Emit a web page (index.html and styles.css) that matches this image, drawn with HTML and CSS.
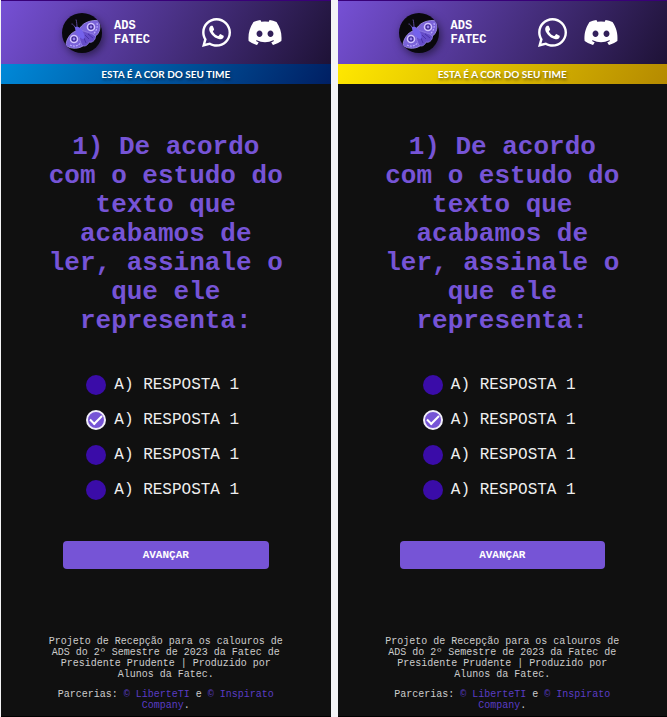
FILE: index.html
```html
<!DOCTYPE html>
<html lang="pt-BR">
<head>
<meta charset="utf-8">
<meta name="viewport" content="width=device-width, initial-scale=1">
<title>ADS FATEC</title>
<link rel="stylesheet" href="styles.css">
</head>
<body>
<svg class="sprite" aria-hidden="true">
  <symbol id="moth" viewBox="0 0 40 40">
    <path d="M14.500 16.500C12 13 11 10.500 9.500 11M15.500 16C14.500 12 15 9 14 6.500" fill="none" stroke="#6c58b8" stroke-width=".8"/>
    <path d="M18 15C22 9 29 7 37 7.500C39 14 38 20 33 23.500C27 25 21 21 18 15Z" fill="#7a63d8" stroke="#a896f2" stroke-width=".8"/>
    <path d="M14 18C8 20 4 27 4 32.500C9 36.500 18 36 22 32C21 25 18 21 14 18Z" fill="#7a63d8" stroke="#a896f2" stroke-width=".8"/>
    <path d="M18 17C24 19 30 20 33.500 23C33.500 28 29.500 30 27 29C26 32 23 34 20 32.500C18 28 16 23 18 17Z" fill="#654cc9" stroke="#9583e8" stroke-width=".8"/>
    <path d="M35 10C36 14 34 19 31 21M8 32C12 34 16 33 18.500 30" fill="none" stroke="#b9a8fa" stroke-width="1.200" stroke-dasharray="2 1"/>
    <path d="M23 22L27 26M22 25L24 30M26 21L31 25" fill="none" stroke="#4530a5" stroke-width=".9"/>
    <path d="M13 14C17 13 20 16 21.500 20C23 23 23 26 21 26C17 25 13 20 13 14Z" fill="#7462ec"/>
    <circle cx="29" cy="14" r="3.500" fill="#3a2593" stroke="#d3c4ff" stroke-width="1.600"/>
    <circle cx="29" cy="14" r="1.400" fill="#9d86f0"/>
    <circle cx="12" cy="26" r="3.500" fill="#3a2593" stroke="#d3c4ff" stroke-width="1.600"/>
    <circle cx="12" cy="26" r="1.400" fill="#9d86f0"/>
  </symbol>
  <symbol id="whatsapp" viewBox="0 0 448 448">
    <path fill="#fff" d="M380.900 65.100C339 23.100 283.200 0 223.900 0 101.500 0 1.900 99.600 1.900 222c0 39.100 10.200 77.300 29.600 111L0 448l117.700-30.900c32.400 17.700 68.900 27 106.100 27h.1c122.300 0 224.100-99.600 224.100-222 0-59.300-25.200-115-67.100-157zm-157 341.600c-33.200 0-65.700-8.900-94-25.700l-6.700-4-69.800 18.300L72 327.200l-4.400-7c-18.500-29.400-28.200-63.300-28.200-98.200 0-101.700 82.800-184.500 184.600-184.500 49.300 0 95.600 19.200 130.400 54.100 34.800 34.900 56.200 81.200 56.100 130.500 0 101.800-84.900 184.600-186.600 184.600zm101.200-138.200c-5.500-2.800-32.800-16.200-37.900-18-5.100-1.900-8.800-2.800-12.500 2.800-3.700 5.600-14.300 18-17.600 21.800-3.200 3.700-6.500 4.200-12 1.400-32.600-16.300-54-29.100-75.500-66-5.700-9.800 5.700-9.100 16.300-30.300 1.800-3.700.9-6.900-.5-9.700-1.400-2.800-12.500-30.100-17.100-41.200-4.500-10.800-9.100-9.300-12.500-9.500-3.200-.2-6.900-.2-10.600-.2-3.700 0-9.700 1.400-14.800 6.900-5.100 5.600-19.400 19-19.400 46.300 0 27.300 19.900 53.700 22.600 57.400 2.800 3.700 39.100 59.700 94.800 83.800 35.200 15.200 49 16.500 66.600 13.900 10.700-1.600 32.800-13.400 37.400-26.400 4.600-13 4.600-24.100 3.200-26.400-1.300-2.500-5-3.900-10.500-6.600z"/>
  </symbol>
  <symbol id="discord" viewBox="0 0 640 512">
    <path fill="#fff" d="M524.531 69.836a1.500 1.500 0 0 0-.764-.7A485.065 485.065 0 0 0 404.081 32.030a1.816 1.816 0 0 0-1.923.91 337.461 337.461 0 0 0-14.900 30.600 447.848 447.848 0 0 0-134.426 0 309.541 309.541 0 0 0-15.135-30.600 1.890 1.890 0 0 0-1.924-.91A483.689 483.689 0 0 0 116.085 69.137a1.712 1.712 0 0 0-.788.676C39.068 183.651 18.186 294.690 28.430 404.354a2.016 2.016 0 0 0 .765 1.375A487.666 487.666 0 0 0 176.020 479.918a1.900 1.900 0 0 0 2.063-.676A348.200 348.200 0 0 0 208.120 430.400a1.860 1.860 0 0 0-1.019-2.588 321.173 321.173 0 0 1-45.868-21.853 1.885 1.885 0 0 1-.185-3.126c3.082-2.309 6.166-4.711 9.109-7.137a1.819 1.819 0 0 1 1.900-.256c96.229 43.917 200.410 43.917 295.500 0a1.812 1.812 0 0 1 1.924.233c2.944 2.426 6.027 4.851 9.132 7.160a1.884 1.884 0 0 1-.162 3.126 301.407 301.407 0 0 1-45.890 21.830 1.875 1.875 0 0 0-1 2.611 391.055 391.055 0 0 0 30.014 48.815 1.864 1.864 0 0 0 2.063.7A486.048 486.048 0 0 0 610.700 405.729a1.882 1.882 0 0 0 .765-1.352C623.729 277.594 590.933 167.465 524.531 69.836ZM222.491 337.580c-28.972 0-52.844-26.587-52.844-59.239S193.056 219.100 222.491 219.100c29.665 0 53.306 26.820 52.843 59.239C275.334 310.993 251.924 337.580 222.491 337.580Zm195.380 0c-28.971 0-52.843-26.587-52.843-59.239S388.437 219.100 417.871 219.100c29.667 0 53.307 26.820 52.844 59.239C470.715 310.993 447.538 337.580 417.871 337.580Z"/>
  </symbol>
</svg>
<div class="screens">
  <section class="screen">
    <header class="header">
      <div class="brand">
        <svg class="logo" aria-hidden="true"><use href="#moth"/></svg>
        <span>ADS<br>FATEC</span>
      </div>
      <nav class="social">
        <a href="#" aria-label="WhatsApp"><svg class="icon-whatsapp"><use href="#whatsapp"/></svg></a>
        <a href="#" aria-label="Discord"><svg class="icon-discord"><use href="#discord"/></svg></a>
      </nav>
    </header>
    <p class="team team-blue">ESTA É A COR DO SEU TIME</p>
    <main class="quiz">
      <h1 id="question-blue">1) De acordo com o estudo do texto que acabamos de ler, assinale o que ele representa:</h1>
      <form class="form" aria-labelledby="question-blue">
        <div class="answers">
          <label><input type="radio" name="blue">A) RESPOSTA 1</label>
          <label><input type="radio" name="blue" checked>A) RESPOSTA 1</label>
          <label><input type="radio" name="blue">A) RESPOSTA 1</label>
          <label><input type="radio" name="blue">A) RESPOSTA 1</label>
        </div>
        <button type="button">AVANÇAR</button>
      </form>
    </main>
    <footer class="footer">
      <p>Projeto de Recepção para os calouros de ADS do 2º Semestre de 2023 da Fatec de Presidente Prudente | Produzido por Alunos da Fatec.</p>
      <p>Parcerias: <a href="#">© LiberteTI</a> e <a href="#">© Inspirato Company</a>.</p>
    </footer>
  </section>
  <section class="screen">
    <header class="header">
      <div class="brand">
        <svg class="logo" aria-hidden="true"><use href="#moth"/></svg>
        <span>ADS<br>FATEC</span>
      </div>
      <nav class="social">
        <a href="#" aria-label="WhatsApp"><svg class="icon-whatsapp"><use href="#whatsapp"/></svg></a>
        <a href="#" aria-label="Discord"><svg class="icon-discord"><use href="#discord"/></svg></a>
      </nav>
    </header>
    <p class="team team-yellow">ESTA É A COR DO SEU TIME</p>
    <main class="quiz">
      <h1 id="question-yellow">1) De acordo com o estudo do texto que acabamos de ler, assinale o que ele representa:</h1>
      <form class="form" aria-labelledby="question-yellow">
        <div class="answers">
          <label><input type="radio" name="yellow">A) RESPOSTA 1</label>
          <label><input type="radio" name="yellow" checked>A) RESPOSTA 1</label>
          <label><input type="radio" name="yellow">A) RESPOSTA 1</label>
          <label><input type="radio" name="yellow">A) RESPOSTA 1</label>
        </div>
        <button type="button">AVANÇAR</button>
      </form>
    </main>
    <footer class="footer">
      <p>Projeto de Recepção para os calouros de ADS do 2º Semestre de 2023 da Fatec de Presidente Prudente | Produzido por Alunos da Fatec.</p>
      <p>Parcerias: <a href="#">© LiberteTI</a> e <a href="#">© Inspirato Company</a>.</p>
    </footer>
  </section>
</div>
</body>
</html>
```
FILE: styles.css
```css
* {
  box-sizing: border-box;
  margin: 0;
}

body {
  background: #f4f4f6;
  font-family: "Liberation Mono", "Courier New", monospace;
}

.sprite {
  display: none;
}

.screens {
  display: grid;
  grid-template-columns: 1fr 1fr;
  gap: 7px;
  min-height: 100vh;
  padding-left: 1px;
}

.screen {
  display: flex;
  flex-direction: column;
  background: #101010;
  border-bottom: 1px solid #000;
}

.header {
  display: flex;
  align-items: center;
  justify-content: space-between;
  height: 64px;
  padding: 0 48px 0 61px;
  border-top: 1px solid #390078;
  background: linear-gradient(120deg, #7650d5, #1e1236);
}

.brand {
  display: flex;
  align-items: center;
  gap: 12px;
  color: #fff;
  font-size: 12px;
  font-weight: 700;
  line-height: 14px;
}

.logo {
  width: 40px;
  height: 40px;
  border-radius: 50%;
  background: #09080c;
  box-shadow: 2px 3px 8px rgba(0, 0, 0, .5);
}

.social {
  display: flex;
  align-items: center;
  gap: 16px;
}

.social a,
.social svg {
  display: block;
}

.icon-whatsapp {
  width: 29px;
  height: 29px;
}

.icon-discord {
  width: 36px;
  height: 29px;
}

.team {
  height: 20px;
  color: #fff;
  font: 700 10px/20px Lato, sans-serif;
  text-align: center;
  text-shadow: 1px 2px 3px rgba(0, 0, 0, .5);
}

.team-blue {
  background: linear-gradient(120deg, #0089d8, #001f63);
}

.team-yellow {
  background: linear-gradient(120deg, #ffe800, #b58a00);
}

.quiz {
  padding: 49px 45px 0;
  text-align: center;
}

h1 {
  color: #7654d6;
  font-size: 26px;
  font-weight: 700;
  line-height: 29px;
}

.form {
  display: flex;
  flex-direction: column;
  align-items: center;
  gap: 41px;
  padding: 39px 17px 0;
}

.answers {
  display: flex;
  flex-direction: column;
  gap: 15px;
  padding-right: 6px;
}

.answers label {
  display: flex;
  align-items: center;
  gap: 8px;
  color: #eee;
  font-size: 16px;
  line-height: 20px;
}

input {
  display: grid;
  place-items: center;
  width: 20px;
  height: 20px;
  margin: 0;
  appearance: none;
  border-radius: 50%;
  background: #3a0ca8;
}

input:checked {
  border: 2px solid #f1eefa;
  background: #7654d6;
}

input:checked::before {
  content: "";
  width: 10px;
  height: 5px;
  margin-bottom: 3px;
  border: solid #fff;
  border-width: 0 0 2px 2px;
  transform: rotate(-45deg);
}

button {
  width: 100%;
  height: 28px;
  border: 0;
  border-radius: 4px;
  background: #7654d6;
  color: #fff;
  font: 700 11px "Liberation Mono", "Courier New", monospace;
}

.footer {
  display: grid;
  gap: 9px;
  margin-top: auto;
  padding: 0 45px 5px;
  color: #ccc;
  font-size: 10px;
  line-height: 11px;
  text-align: center;
}

.footer a {
  color: #5a3cc4;
  text-decoration: none;
}
```
